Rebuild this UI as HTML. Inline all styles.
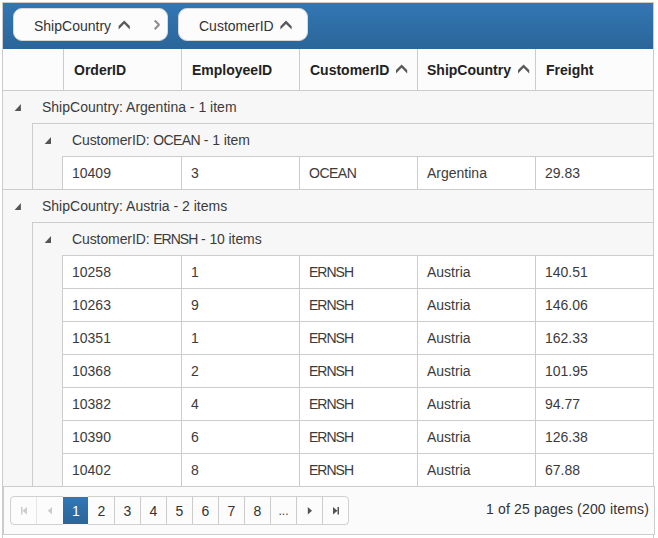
<!DOCTYPE html>
<html><head><meta charset="utf-8"><style>
*{box-sizing:border-box;margin:0;padding:0}
html,body{width:658px;height:538px;overflow:hidden;background:#fff}
body{position:relative;font-family:"Liberation Sans",sans-serif;font-size:14px;color:#3b3b3b}
.a{position:absolute}
.hl{position:absolute;height:1px;background:#cccccc}
.vl{position:absolute;width:1px;background:#cccccc}
.t{position:absolute;white-space:nowrap;line-height:16px}
.gb{background:#f7f7f7}
.tri{position:absolute;width:0;height:0;border-style:solid;border-width:0 0 7px 7px;border-color:transparent transparent #555 transparent}
</style></head><body>

<div class="a" style="left:2px;top:2px;width:652px;height:600px;border:1px solid #cccccc;border-bottom:0"></div>
<div class="a" style="left:3px;top:3px;width:650px;height:46px;background:linear-gradient(#3277b4,#2b6599)"></div>
<div class="a" style="left:13px;top:8px;width:155px;height:33px;border-radius:9px;background:#fcfcfc;border:1px solid #d8d8d8"></div>
<div class="t" style="left:34px;top:18px;color:#333">ShipCountry</div>
<div class="a" style="left:178px;top:8px;width:130px;height:33px;border-radius:9px;background:#fcfcfc;border:1px solid #d8d8d8"></div>
<div class="t" style="left:199px;top:18px;color:#333">CustomerID</div>
<div class="a" style="left:3px;top:49px;width:650px;height:41px;background:#fcfcfc"></div>
<div class="hl" style="left:3px;top:90px;width:650px"></div>
<div class="vl" style="left:63px;top:49px;height:41px"></div>
<div class="vl" style="left:181px;top:49px;height:41px"></div>
<div class="vl" style="left:299px;top:49px;height:41px"></div>
<div class="vl" style="left:417px;top:49px;height:41px"></div>
<div class="vl" style="left:535px;top:49px;height:41px"></div>
<div class="t" style="left:74px;top:62px;font-weight:bold;color:#222">OrderID</div>
<div class="t" style="left:192px;top:62px;font-weight:bold;color:#222">EmployeeID</div>
<div class="t" style="left:310px;top:62px;font-weight:bold;color:#222">CustomerID</div>
<div class="t" style="left:427px;top:62px;font-weight:bold;color:#222">ShipCountry</div>
<div class="t" style="left:546px;top:62px;font-weight:bold;color:#222">Freight</div>
<div class="a gb" style="left:3px;top:91px;width:650px;height:32px"></div>
<div class="t" style="left:42px;top:99px">ShipCountry: Argentina - 1 item</div>
<div class="a gb" style="left:3px;top:123px;width:650px;height:66px"></div>
<div class="hl" style="left:32px;top:123px;width:621px"></div>
<div class="vl" style="left:32px;top:123px;height:66px"></div>
<div class="t" style="left:72px;top:132px;letter-spacing:-0.1px">CustomerID: <span style='letter-spacing:-0.6px'>OCEAN</span> - 1 item</div>
<div class="a" style="left:63px;top:157px;width:590px;height:32px;background:#fff"></div>
<div class="hl" style="left:62px;top:156px;width:591px"></div>
<div class="vl" style="left:62px;top:156px;height:33px"></div>
<div class="vl" style="left:181px;top:156px;height:33px"></div>
<div class="vl" style="left:299px;top:156px;height:33px"></div>
<div class="vl" style="left:417px;top:156px;height:33px"></div>
<div class="vl" style="left:535px;top:156px;height:33px"></div>
<div class="t" style="left:72px;top:165px;letter-spacing:0px">10409</div>
<div class="t" style="left:191px;top:165px;letter-spacing:0px">3</div>
<div class="t" style="left:309px;top:165px;letter-spacing:-0.5px">OCEAN</div>
<div class="t" style="left:427px;top:165px;letter-spacing:0px">Argentina</div>
<div class="t" style="left:545px;top:165px;letter-spacing:0px">29.83</div>
<div class="hl" style="left:3px;top:189px;width:650px"></div>
<div class="a gb" style="left:3px;top:190px;width:650px;height:32px"></div>
<div class="t" style="left:42px;top:198px">ShipCountry: Austria - 2 items</div>
<div class="a gb" style="left:3px;top:222px;width:650px;height:264px"></div>
<div class="hl" style="left:32px;top:222px;width:621px"></div>
<div class="vl" style="left:32px;top:222px;height:264px"></div>
<div class="t" style="left:72px;top:231px;letter-spacing:-0.1px">CustomerID: <span style='letter-spacing:-1px'>ERNSH</span> - 10 items</div>
<div class="a" style="left:63px;top:256px;width:590px;height:32px;background:#fff"></div>
<div class="hl" style="left:62px;top:255px;width:591px"></div>
<div class="vl" style="left:62px;top:255px;height:33px"></div>
<div class="vl" style="left:181px;top:255px;height:33px"></div>
<div class="vl" style="left:299px;top:255px;height:33px"></div>
<div class="vl" style="left:417px;top:255px;height:33px"></div>
<div class="vl" style="left:535px;top:255px;height:33px"></div>
<div class="t" style="left:72px;top:264px;letter-spacing:0px">10258</div>
<div class="t" style="left:191px;top:264px;letter-spacing:0px">1</div>
<div class="t" style="left:309px;top:264px;letter-spacing:-1px">ERNSH</div>
<div class="t" style="left:427px;top:264px;letter-spacing:0px">Austria</div>
<div class="t" style="left:545px;top:264px;letter-spacing:0px">140.51</div>
<div class="a" style="left:63px;top:289px;width:590px;height:32px;background:#fff"></div>
<div class="hl" style="left:62px;top:288px;width:591px"></div>
<div class="vl" style="left:62px;top:288px;height:33px"></div>
<div class="vl" style="left:181px;top:288px;height:33px"></div>
<div class="vl" style="left:299px;top:288px;height:33px"></div>
<div class="vl" style="left:417px;top:288px;height:33px"></div>
<div class="vl" style="left:535px;top:288px;height:33px"></div>
<div class="t" style="left:72px;top:297px;letter-spacing:0px">10263</div>
<div class="t" style="left:191px;top:297px;letter-spacing:0px">9</div>
<div class="t" style="left:309px;top:297px;letter-spacing:-1px">ERNSH</div>
<div class="t" style="left:427px;top:297px;letter-spacing:0px">Austria</div>
<div class="t" style="left:545px;top:297px;letter-spacing:0px">146.06</div>
<div class="a" style="left:63px;top:322px;width:590px;height:32px;background:#fff"></div>
<div class="hl" style="left:62px;top:321px;width:591px"></div>
<div class="vl" style="left:62px;top:321px;height:33px"></div>
<div class="vl" style="left:181px;top:321px;height:33px"></div>
<div class="vl" style="left:299px;top:321px;height:33px"></div>
<div class="vl" style="left:417px;top:321px;height:33px"></div>
<div class="vl" style="left:535px;top:321px;height:33px"></div>
<div class="t" style="left:72px;top:330px;letter-spacing:0px">10351</div>
<div class="t" style="left:191px;top:330px;letter-spacing:0px">1</div>
<div class="t" style="left:309px;top:330px;letter-spacing:-1px">ERNSH</div>
<div class="t" style="left:427px;top:330px;letter-spacing:0px">Austria</div>
<div class="t" style="left:545px;top:330px;letter-spacing:0px">162.33</div>
<div class="a" style="left:63px;top:355px;width:590px;height:32px;background:#fff"></div>
<div class="hl" style="left:62px;top:354px;width:591px"></div>
<div class="vl" style="left:62px;top:354px;height:33px"></div>
<div class="vl" style="left:181px;top:354px;height:33px"></div>
<div class="vl" style="left:299px;top:354px;height:33px"></div>
<div class="vl" style="left:417px;top:354px;height:33px"></div>
<div class="vl" style="left:535px;top:354px;height:33px"></div>
<div class="t" style="left:72px;top:363px;letter-spacing:0px">10368</div>
<div class="t" style="left:191px;top:363px;letter-spacing:0px">2</div>
<div class="t" style="left:309px;top:363px;letter-spacing:-1px">ERNSH</div>
<div class="t" style="left:427px;top:363px;letter-spacing:0px">Austria</div>
<div class="t" style="left:545px;top:363px;letter-spacing:0px">101.95</div>
<div class="a" style="left:63px;top:388px;width:590px;height:32px;background:#fff"></div>
<div class="hl" style="left:62px;top:387px;width:591px"></div>
<div class="vl" style="left:62px;top:387px;height:33px"></div>
<div class="vl" style="left:181px;top:387px;height:33px"></div>
<div class="vl" style="left:299px;top:387px;height:33px"></div>
<div class="vl" style="left:417px;top:387px;height:33px"></div>
<div class="vl" style="left:535px;top:387px;height:33px"></div>
<div class="t" style="left:72px;top:396px;letter-spacing:0px">10382</div>
<div class="t" style="left:191px;top:396px;letter-spacing:0px">4</div>
<div class="t" style="left:309px;top:396px;letter-spacing:-1px">ERNSH</div>
<div class="t" style="left:427px;top:396px;letter-spacing:0px">Austria</div>
<div class="t" style="left:545px;top:396px;letter-spacing:0px">94.77</div>
<div class="a" style="left:63px;top:421px;width:590px;height:32px;background:#fff"></div>
<div class="hl" style="left:62px;top:420px;width:591px"></div>
<div class="vl" style="left:62px;top:420px;height:33px"></div>
<div class="vl" style="left:181px;top:420px;height:33px"></div>
<div class="vl" style="left:299px;top:420px;height:33px"></div>
<div class="vl" style="left:417px;top:420px;height:33px"></div>
<div class="vl" style="left:535px;top:420px;height:33px"></div>
<div class="t" style="left:72px;top:429px;letter-spacing:0px">10390</div>
<div class="t" style="left:191px;top:429px;letter-spacing:0px">6</div>
<div class="t" style="left:309px;top:429px;letter-spacing:-1px">ERNSH</div>
<div class="t" style="left:427px;top:429px;letter-spacing:0px">Austria</div>
<div class="t" style="left:545px;top:429px;letter-spacing:0px">126.38</div>
<div class="a" style="left:63px;top:454px;width:590px;height:32px;background:#fff"></div>
<div class="hl" style="left:62px;top:453px;width:591px"></div>
<div class="vl" style="left:62px;top:453px;height:33px"></div>
<div class="vl" style="left:181px;top:453px;height:33px"></div>
<div class="vl" style="left:299px;top:453px;height:33px"></div>
<div class="vl" style="left:417px;top:453px;height:33px"></div>
<div class="vl" style="left:535px;top:453px;height:33px"></div>
<div class="t" style="left:72px;top:462px;letter-spacing:0px">10402</div>
<div class="t" style="left:191px;top:462px;letter-spacing:0px">8</div>
<div class="t" style="left:309px;top:462px;letter-spacing:-1px">ERNSH</div>
<div class="t" style="left:427px;top:462px;letter-spacing:0px">Austria</div>
<div class="t" style="left:545px;top:462px;letter-spacing:0px">67.88</div>
<div class="a" style="left:3px;top:486px;width:652px;height:49px;border:1px solid #cccccc;background:#fbfbfb"></div>
<div class="a" style="left:10px;top:496px;width:339px;height:29px;border:1px solid #d0d0d0;border-radius:4px;background:#fcfcfc"></div>
<div class="vl" style="left:36px;top:497px;height:27px;background:#e6e6e6"></div>
<div class="vl" style="left:114px;top:497px;height:27px"></div>
<div class="vl" style="left:140px;top:497px;height:27px"></div>
<div class="vl" style="left:166px;top:497px;height:27px"></div>
<div class="vl" style="left:192px;top:497px;height:27px"></div>
<div class="vl" style="left:218px;top:497px;height:27px"></div>
<div class="vl" style="left:244px;top:497px;height:27px"></div>
<div class="vl" style="left:270px;top:497px;height:27px"></div>
<div class="vl" style="left:296px;top:497px;height:27px"></div>
<div class="vl" style="left:322px;top:497px;height:27px"></div>
<div class="a" style="left:63px;top:496px;width:25px;height:29px;background:#f4f4f4"></div>
<div class="a" style="left:63px;top:497px;width:25px;height:27px;background:linear-gradient(#3277b4,#2b6599)"></div>
<div class="t" style="left:63px;width:26px;text-align:center;top:503px;color:#fff">1</div>
<div class="t" style="left:88px;width:27px;text-align:center;top:503px;color:#333">2</div>
<div class="t" style="left:114px;width:27px;text-align:center;top:503px;color:#333">3</div>
<div class="t" style="left:140px;width:27px;text-align:center;top:503px;color:#333">4</div>
<div class="t" style="left:166px;width:27px;text-align:center;top:503px;color:#333">5</div>
<div class="t" style="left:192px;width:27px;text-align:center;top:503px;color:#333">6</div>
<div class="t" style="left:218px;width:27px;text-align:center;top:503px;color:#333">7</div>
<div class="t" style="left:244px;width:27px;text-align:center;top:503px;color:#333">8</div>
<div class="t" style="left:270px;width:27px;text-align:center;top:503px;font-size:12px">...</div>
<svg class="a" style="left:18px;top:505px" width="12" height="12" viewBox="0 0 12 12"><rect x="3" y="2" width="1.5" height="7.5" fill="#ccc"/><path d="M4.5 5.75 L9 2 L9 9.5 Z" fill="#ccc"/></svg>
<svg class="a" style="left:44px;top:505px" width="12" height="12" viewBox="0 0 12 12"><path d="M3.8 5.75 L8 2 L8 9.5 Z" fill="#ccc"/></svg>
<svg class="a" style="left:304px;top:505px" width="12" height="12" viewBox="0 0 12 12"><path d="M8 5.75 L3.8 2 L3.8 9.5 Z" fill="#555"/></svg>
<svg class="a" style="left:330px;top:505px" width="12" height="12" viewBox="0 0 12 12"><rect x="7.5" y="2" width="1.5" height="7.5" fill="#555"/><path d="M7.5 5.75 L3 2 L3 9.5 Z" fill="#555"/></svg>
<div class="t" style="left:486px;top:501px;color:#333;letter-spacing:0.17px">1 of 25 pages (200 items)</div>
<svg class="a" style="left:0;top:0" width="658" height="538"><path d="M14.6 111.0 L20.9 104.1 L20.9 111.0 Z" fill="#555"/><path d="M44.7 143.9 L51.0 137.1 L51.0 143.9 Z" fill="#555"/><path d="M14.6 210.0 L20.9 203.1 L20.9 210.0 Z" fill="#555"/><path d="M44.7 242.9 L51.0 236.1 L51.0 242.9 Z" fill="#555"/><path d="M118.60 26.10 L124.20 20.50 L129.80 26.10 L129.80 29.40 L124.20 23.80 L118.60 29.40 Z" fill="#5a5a5a"/><path d="M280.40 26.20 L286.00 20.60 L291.60 26.20 L291.60 29.50 L286.00 23.90 L280.40 29.50 Z" fill="#5a5a5a"/><path d="M396.00 70.10 L401.60 64.50 L407.20 70.10 L407.20 73.40 L401.60 67.80 L396.00 73.40 Z" fill="#5a5a5a"/><path d="M518.00 70.10 L523.60 64.50 L529.20 70.10 L529.20 73.40 L523.60 67.80 L518.00 73.40 Z" fill="#5a5a5a"/><path d="M154.7 20.55 L159 24.85 L154.7 29.15" fill="none" stroke="#8c8c8c" stroke-width="2.1" stroke-linejoin="bevel"/></svg>
</body></html>
